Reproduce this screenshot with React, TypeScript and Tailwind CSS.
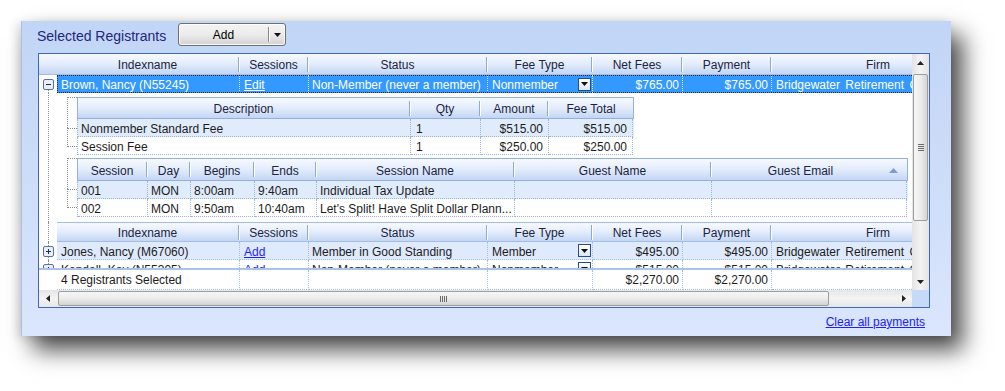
import React from "react";

type Col = { key: string; label: string; w: string; right?: boolean };
type Reg = {
  name: string;
  sessions: string;
  status: string;
  feeType: string;
  net: string;
  pay: string;
  firm: string;
};

const mainCols: Col[] = [
  { key: "name", label: "Indexname", w: "w-[183px]" },
  { key: "sessions", label: "Sessions", w: "w-[69px]" },
  { key: "status", label: "Status", w: "w-[179px]" },
  { key: "feeType", label: "Fee Type", w: "w-[105px]" },
  { key: "net", label: "Net Fees", w: "w-[90px]", right: true },
  { key: "pay", label: "Payment", w: "w-[89px]", right: true },
  { key: "firm", label: "Firm", w: "w-[212px]" },
];

const feeCols: Col[] = [
  { key: "desc", label: "Description", w: "w-[333px]" },
  { key: "qty", label: "Qty", w: "w-[70px]" },
  { key: "amount", label: "Amount", w: "w-[68px]", right: true },
  { key: "total", label: "Fee Total", w: "w-[84px]", right: true },
];

const sessionCols: Col[] = [
  { key: "session", label: "Session", w: "w-[70px]" },
  { key: "day", label: "Day", w: "w-[43px]" },
  { key: "begins", label: "Begins", w: "w-[64px]" },
  { key: "ends", label: "Ends", w: "w-[62px]" },
  { key: "name", label: "Session Name", w: "w-[198px]" },
  { key: "guest", label: "Guest Name", w: "w-[197px]" },
  { key: "email", label: "Guest Email", w: "w-[195px]" },
];

const fees = [
  { desc: "Nonmember Standard Fee", qty: "1", amount: "$515.00", total: "$515.00" },
  { desc: "Session Fee", qty: "1", amount: "$250.00", total: "$250.00" },
];

const sessions = [
  { session: "001", day: "MON", begins: "8:00am", ends: "9:40am", name: "Individual Tax Update", guest: "", email: "" },
  { session: "002", day: "MON", begins: "9:50am", ends: "10:40am", name: "Let's Split! Have Split Dollar Plann...", guest: "", email: "" },
];

const brown: Reg = {
  name: "Brown, Nancy (N55245)",
  sessions: "Edit",
  status: "Non-Member (never a member)",
  feeType: "Nonmember",
  net: "$765.00",
  pay: "$765.00",
  firm: "Bridgewater Retirement Group",
};

const others: Reg[] = [
  {
    name: "Jones, Nancy (M67060)",
    sessions: "Add",
    status: "Member in Good Standing",
    feeType: "Member",
    net: "$495.00",
    pay: "$495.00",
    firm: "Bridgewater Retirement Group",
  },
  {
    name: "Kendall, Kay (N55305)",
    sessions: "Add",
    status: "Non-Member (never a member)",
    feeType: "Nonmember",
    net: "$515.00",
    pay: "$515.00",
    firm: "Bridgewater Retirement Group",
  },
];

const headerBg = "bg-linear-to-b from-[#f7faff] via-[#e3ecfb] to-[#c3d6f5]";

function HeaderCell({ col, last, sortUp }: { col: Col; last?: boolean; sortUp?: boolean }) {
  return (
    <div className={`${col.w} shrink-0 h-full flex items-center`}>
      <span className="flex-1 text-center whitespace-nowrap pt-[3px]">{col.label}</span>
      {sortUp && (
        <span className="w-[18px] flex items-center justify-start pt-[2px]">
          <svg width="9" height="5" viewBox="0 0 9 5">
            <path d="M0 5 L4.5 0 L9 5 Z" fill="#7f9cca" />
          </svg>
        </span>
      )}
      {!last && <div className="h-[15px] w-[2px] border-l border-[#8fa8d4] bg-white" />}
    </div>
  );
}

function ComboArrow() {
  return (
    <div className="w-[13px] h-[13px] border border-[#2b4c8c] bg-linear-to-b from-white to-[#dde6f5] flex items-center justify-center">
      <svg width="7" height="4" viewBox="0 0 7 4">
        <path d="M0 0 H7 L3.5 4 Z" fill="#111" />
      </svg>
    </div>
  );
}

function ExpandBox({ plus }: { plus?: boolean }) {
  return (
    <svg width="11" height="11" viewBox="0 0 11 11" className="shrink-0">
      <rect x="0.5" y="0.5" width="10" height="10" rx="1.5" fill="#e9eff9" stroke="#5a72a3" />
      <path d="M3 5.5 H8" stroke="#1d2b55" />
      {plus && <path d="M5.5 3 V8" stroke="#1d2b55" />}
    </svg>
  );
}

function Gutter({ box, lineTop }: { box?: "plus" | "minus"; lineTop?: boolean }) {
  if (!box) {
    return (
      <div className="w-[18px] shrink-0 pl-[9px]">
        <div className="h-full border-l border-dotted border-[#8c8c8c]" />
      </div>
    );
  }
  return (
    <div className="w-[18px] shrink-0 flex flex-col pl-[4px] bg-white">
      <div className={`h-[4px] ml-[5px] ${lineTop ? "border-l border-dotted border-[#8c8c8c]" : ""}`} />
      <ExpandBox plus={box === "plus"} />
      <div className="flex-1 ml-[5px] border-l border-dotted border-[#8c8c8c]" />
    </div>
  );
}

function MainRow({ row, selected, alt, box }: { row: Reg; selected?: boolean; alt?: boolean; box: "plus" | "minus" }) {
  const sep = selected
    ? "border-r border-dotted border-[#d2e6ff]"
    : "border-r border-b border-dotted border-[#a6bde2]";
  const link = selected ? "underline text-white" : "underline text-[#1f1fff]";
  return (
    <div className="flex h-[18px] shrink-0">
      <Gutter box={box} lineTop={!selected} />
      <div
        className={`flex h-full ${
          selected
            ? "bg-[#3399ff] text-white outline-1 outline-dotted outline-[#2a2a2a] -outline-offset-1"
            : alt
            ? "bg-[#dfeafc] text-[#1c1c1c]"
            : "bg-white text-[#1c1c1c]"
        }`}
      >
        <div className={`w-[183px] shrink-0 pl-[4px] pt-[3px] flex items-center whitespace-nowrap ${sep}`}>{row.name}</div>
        <div className={`w-[69px] shrink-0 pl-[4px] pt-[3px] flex items-center ${sep}`}>
          <span className={link}>{row.sessions}</span>
        </div>
        <div className={`w-[179px] shrink-0 pl-[3px] pt-[3px] flex items-center whitespace-nowrap overflow-hidden ${sep}`}>{row.status}</div>
        <div className={`w-[105px] shrink-0 pl-[4px] pr-[1px] flex items-center justify-between ${sep}`}>
          <span className="pt-[3px]">{row.feeType}</span>
          <ComboArrow />
        </div>
        <div className={`w-[90px] shrink-0 pr-[3px] pt-[3px] flex items-center justify-end ${sep}`}>{row.net}</div>
        <div className={`w-[89px] shrink-0 pr-[3px] pt-[3px] flex items-center justify-end ${sep}`}>{row.pay}</div>
        <div className={`w-[212px] shrink-0 pl-[4px] pt-[3px] flex items-center whitespace-nowrap [word-spacing:2px] ${selected ? "" : "border-b border-dotted border-[#a6bde2]"}`}>
          {row.firm}
        </div>
      </div>
    </div>
  );
}

function Bracket() {
  return (
    <div className="w-[20px] shrink-0 pl-[10px]">
      <div className="h-[31px] border-l border-t border-dotted border-[#8c8c8c]" />
      <div className="h-[19px] border-l border-t border-b border-dotted border-[#8c8c8c]" />
    </div>
  );
}

function SubTable({ cols, rows, headerH, sortLast }: { cols: Col[]; rows: Record<string, string>[]; headerH: string; sortLast?: boolean }) {
  return (
    <div className="flex flex-col">
      <div className={`flex ${headerH} border border-[#94b0de] ${headerBg} text-[#1c2440]`}>
        {cols.map((c, i) => (
          <HeaderCell key={c.key} col={c} last={i === cols.length - 1} sortUp={sortLast && i === cols.length - 1} />
        ))}
      </div>
      {rows.map((r, ri) => (
        <div
          key={ri}
          className={`flex h-[18px] border-l border-dotted border-[#9db4dc] text-[#1c1c1c] ${ri % 2 === 0 ? "bg-[#e0ebfc]" : "bg-white"}`}
        >
          {cols.map((c, ci) => (
            <div
              key={c.key}
              className={`${c.w} shrink-0 pt-[3px] flex items-center whitespace-nowrap overflow-hidden border-b border-r border-dotted border-[#9db4dc] ${
                c.right ? "justify-end pr-[5px]" : ci === 1 && cols.length === 4 ? "pl-[5px]" : "pl-[3px]"
              }`}
            >
              {r[c.key]}
            </div>
          ))}
        </div>
      ))}
    </div>
  );
}

function DetailArea() {
  return (
    <div className="flex h-[129px] shrink-0 bg-white">
      <Gutter />
      <div className="flex flex-col pt-[4px]">
        <div className="flex items-start">
          <Bracket />
          <SubTable cols={feeCols} rows={fees} headerH="h-[22px]" />
        </div>
        <div className="flex items-start mt-[3px]">
          <Bracket />
          <SubTable cols={sessionCols} rows={sessions} headerH="h-[23px]" sortLast />
        </div>
      </div>
    </div>
  );
}

function FooterRow() {
  const cell = "shrink-0 h-full pt-[2px] flex items-center border-r border-b border-dotted border-[#a6bde2]";
  return (
    <div className="flex shrink-0 h-[22px] border-t-2 border-[#a8c2ec] bg-white text-[#1c1c1c]">
      <div className="w-[18px] shrink-0" />
      <div className={`w-[183px] pl-[4px] ${cell}`}>4 Registrants Selected</div>
      <div className={`w-[69px] ${cell}`} />
      <div className={`w-[179px] ${cell}`} />
      <div className={`w-[105px] ${cell}`} />
      <div className={`w-[90px] pr-[3px] justify-end ${cell}`}>$2,270.00</div>
      <div className={`w-[89px] pr-[3px] justify-end ${cell}`}>$2,270.00</div>
      <div className="w-[212px] shrink-0 border-b border-dotted border-[#a6bde2]" />
    </div>
  );
}

function VScroll() {
  return (
    <div className="w-[17px] shrink-0 flex flex-col bg-linear-to-r from-[#e4e4e4] via-[#f3f3f3] to-[#e4e4e4]">
      <div className="h-[17px] flex items-center justify-center">
        <svg width="7" height="4" viewBox="0 0 7 4">
          <path d="M0 4 L3.5 0 L7 4 Z" fill="#222" />
        </svg>
      </div>
      <div className="flex-1 px-[1px] pt-[3px]">
        <div className="h-[147px] rounded-[2px] border border-[#9e9e9e] bg-linear-to-r from-[#f7f7f7] via-[#ececec] to-[#d4d4d4] flex flex-col items-center justify-center gap-[1px]">
          <div className="w-[6px] h-px bg-[#6b6b6b]" />
          <div className="w-[6px] h-px bg-[#6b6b6b]" />
          <div className="w-[6px] h-px bg-[#6b6b6b]" />
          <div className="w-[6px] h-px bg-[#6b6b6b]" />
        </div>
      </div>
      <div className="h-[17px] flex items-center justify-center">
        <svg width="7" height="4" viewBox="0 0 7 4">
          <path d="M0 0 H7 L3.5 4 Z" fill="#222" />
        </svg>
      </div>
    </div>
  );
}

function HScroll() {
  return (
    <div className="flex shrink-0 h-[17px]">
      <div className="w-[873px] flex bg-linear-to-b from-[#e6e6e6] via-[#f4f4f4] to-[#e6e6e6]">
        <div className="w-[17px] flex items-center justify-center">
          <svg width="4" height="7" viewBox="0 0 4 7">
            <path d="M4 0 V7 L0 3.5 Z" fill="#222" />
          </svg>
        </div>
        <div className="py-[1px] pl-[2px]">
          <div className="w-[771px] h-full rounded-[2px] border border-[#9e9e9e] bg-linear-to-b from-[#f7f7f7] via-[#ececec] to-[#d2d2d2] flex items-center justify-center gap-[1px]">
            <div className="h-[6px] w-px bg-[#6b6b6b]" />
            <div className="h-[6px] w-px bg-[#6b6b6b]" />
            <div className="h-[6px] w-px bg-[#6b6b6b]" />
            <div className="h-[6px] w-px bg-[#6b6b6b]" />
          </div>
        </div>
        <div className="flex-1" />
        <div className="w-[17px] flex items-center justify-center">
          <svg width="4" height="7" viewBox="0 0 4 7">
            <path d="M0 0 V7 L4 3.5 Z" fill="#222" />
          </svg>
        </div>
      </div>
      <div className="w-[17px] bg-[#c5d9f8]" />
    </div>
  );
}

function RegistrantGrid() {
  return (
    <div className="w-[892px] h-[255px] mt-[7px] border border-[#3f68b8] bg-white flex flex-col">
      <div className="flex h-[236px]">
        <div className="w-[873px] flex flex-col overflow-hidden">
          <div className={`flex shrink-0 h-[21px] ${headerBg} border-b border-[#a3bde8] text-[#1c2440]`}>
            <div className="w-[18px] shrink-0" />
            {mainCols.map((c, i) => (
              <HeaderCell key={c.key} col={c} last={i === mainCols.length - 1} />
            ))}
          </div>
          <div className="h-[193px] overflow-hidden flex flex-col">
            <MainRow row={brown} selected box="minus" />
            <DetailArea />
            <div className="flex shrink-0 h-[20px]">
              <Gutter />
              <div className={`flex h-[20px] ${headerBg} border-t border-b border-[#a3bde8] text-[#1c2440]`}>
                {mainCols.map((c, i) => (
                  <HeaderCell key={c.key} col={c} last={i === mainCols.length - 1} />
                ))}
              </div>
            </div>
            {others.map((r, i) => (
              <MainRow key={r.name} row={r} alt={i % 2 === 0} box="plus" />
            ))}
          </div>
          <FooterRow />
        </div>
        <VScroll />
      </div>
      <HScroll />
    </div>
  );
}

export default function App() {
  return (
    <div className="w-[1005px] h-[391px] overflow-hidden bg-white pt-[21px] pl-[21px] font-['Liberation_Sans',Arial,sans-serif] text-[12px] leading-[17px]">
      <div className="w-[930px] h-[315px] flex flex-col pl-[16px] pt-[2px] bg-linear-to-b from-[#c1d5f6] to-[#dae6fc] border-l border-[#a9bfe6] shadow-[12px_14px_22px_rgba(0,0,0,0.7),-3px_2px_10px_rgba(0,0,0,0.15)]">
        <div className="flex items-center h-[23px]">
          <h2 className="w-[141px] -ml-[1px] pt-[3px] text-[14px] text-[#25257d] whitespace-nowrap">Selected Registrants</h2>
          <button className="w-[108px] h-[23px] flex items-stretch rounded-[3px] border border-[#6f6f6f] bg-linear-to-b from-[#f4f4f4] via-[#ebebeb] to-[#d3d3d3] shadow-[inset_0_0_0_1px_rgba(255,255,255,0.8)]">
            <span className="w-[89px] pt-[2px] flex items-center justify-center text-black">Add</span>
            <span className="my-[3px] w-[2px] border-l border-[#8a8a8a] bg-white" />
            <span className="flex-1 flex items-center justify-center">
              <svg width="7" height="4" viewBox="0 0 7 4">
                <path d="M0 0 H7 L3.5 4 Z" fill="#111" />
              </svg>
            </span>
          </button>
        </div>
        <RegistrantGrid />
        <div className="flex justify-end pr-[26px] mt-[7px]">
          <a href="#" className="text-[#2020ff] underline leading-[14px]">
            Clear all payments
          </a>
        </div>
      </div>
    </div>
  );
}
